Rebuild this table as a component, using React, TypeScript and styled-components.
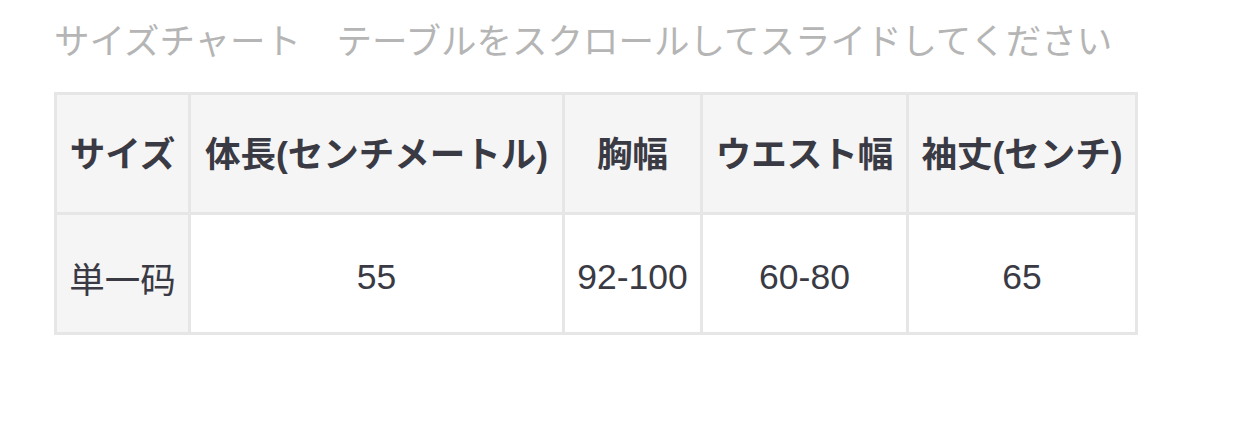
import React from "react";
import styled, { createGlobalStyle } from "styled-components";

const Global = createGlobalStyle`
  html, body { margin: 0; padding: 0; background: #ffffff; }
  body { font-family: "Liberation Sans", "Noto Sans CJK JP", sans-serif; }
`;

const Page = styled.div`
  padding: 20px 0 0 54px;
`;

const Title = styled.div`
  font-size: 35.5px;
  line-height: 44px;
  color: #b5b5b5;
  font-weight: 400;
  margin: 0 0 28px 0;
  white-space: pre;
`;

const Table = styled.table`
  border-collapse: collapse;
  border: 3px solid #e6e6e6;
  table-layout: fixed;
`;

const Cell = styled.td<{ $head?: boolean; $side?: boolean; $w: number }>`
  width: ${(p) => p.$w}px;
  height: 120px;
  padding: ${(p) => (p.$head ? "0 0 4px" : "7px 0 0")};
  border: 3px solid #e6e6e6;
  background: ${(p) => (p.$head || p.$side ? "#f5f5f5" : "#ffffff")};
  color: #3a3a44;
  font-size: 35.5px;
  font-weight: ${(p) => (p.$head ? 700 : 400)};
  text-align: center;
  white-space: nowrap;
  box-sizing: border-box;
`;

const widths = [134, 374, 138, 206, 229];
const head = ["サイズ", "体長(センチメートル)", "胸幅", "ウエスト幅", "袖丈(センチ)"];
const row = ["単一码", "55", "92-100", "60-80", "65"];

export default function App() {
  return (
    <>
      <Global />
      <Page>
        <Title>{"サイズチャート　テーブルをスクロールしてスライドしてください"}</Title>
        <Table>
          <tbody>
            <tr>
              {head.map((h, i) => (
                <Cell key={h} $head $w={widths[i]}>
                  {h}
                </Cell>
              ))}
            </tr>
            <tr>
              {row.map((c, i) => (
                <Cell key={c} $side={i === 0} $w={widths[i]}>
                  {c}
                </Cell>
              ))}
            </tr>
          </tbody>
        </Table>
      </Page>
    </>
  );
}
